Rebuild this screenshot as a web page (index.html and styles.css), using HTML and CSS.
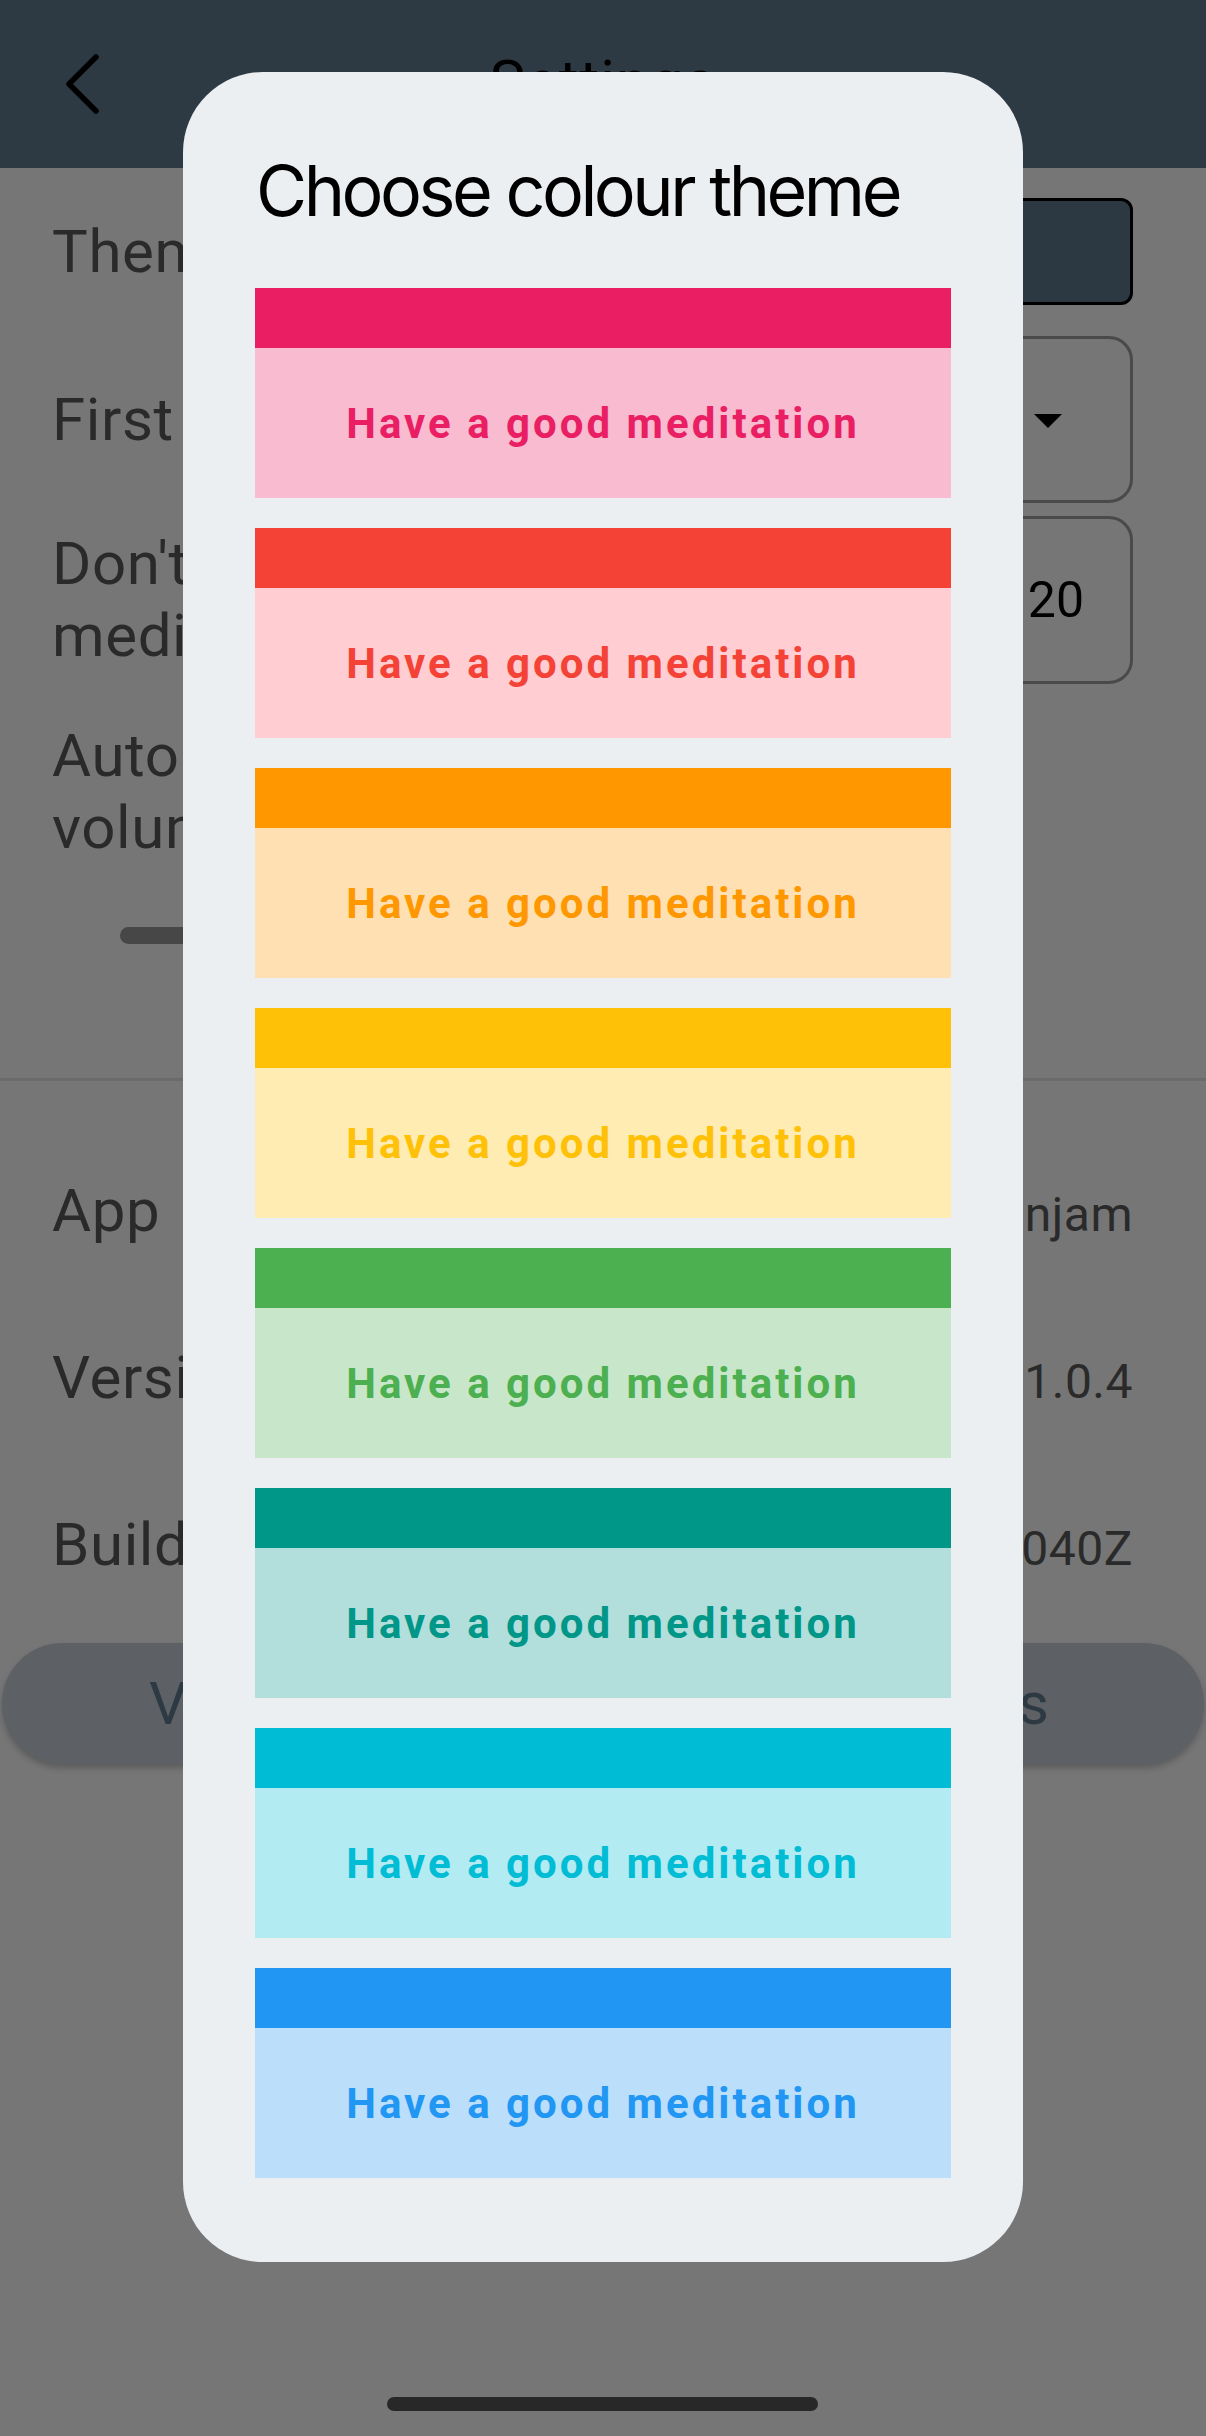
FILE: index.html
```html
<!DOCTYPE html>
<html lang="en">
<head>
<meta charset="utf-8">
<title>Settings</title>
<link rel="stylesheet" href="styles.css">
</head>
<body>
<div class="screen">
  <header class="appbar">
    <div class="back">
      <svg width="44" height="64" viewBox="0 0 44 64"><polyline points="36,5 9,32 36,59" fill="none" stroke="#000" stroke-width="5.5" stroke-linecap="round" stroke-linejoin="round"/></svg>
    </div>
    <div class="appbar-title">Settings</div>
    <div></div>
  </header>

  <main class="content">
    <div class="row row-theme">
      <div class="label">Theme</div>
      <div class="theme-swatch"></div>
    </div>
    <div class="row row-select">
      <div class="label">First screen</div>
      <div class="select"><span class="caret"></span></div>
    </div>
    <div class="row row-number">
      <div class="label">Don't disturb during<br>meditation</div>
      <div class="number">20</div>
    </div>
    <div class="label label-block">Automatic<br>volume</div>
    <div class="slider"><div class="track"></div></div>
  </main>

  <div class="divider"></div>

  <section class="info">
    <div class="info-row"><span class="label">App</span><span class="value">Medi by Benjam</span></div>
    <div class="info-row"><span class="label">Version</span><span class="value">1.0.4</span></div>
    <div class="info-row"><span class="label">Build time</span><span class="value">2023-05-1T00:00:00.040Z</span></div>
  </section>

  <div class="pill">View open source licences</div>

  <div class="dialog">
    <h1 class="dialog-title">Choose colour theme</h1>
    <div class="themes">
      <div class="theme t-pink"><div class="band"></div><div class="body">Have a good meditation</div></div>
      <div class="theme t-red"><div class="band"></div><div class="body">Have a good meditation</div></div>
      <div class="theme t-orange"><div class="band"></div><div class="body">Have a good meditation</div></div>
      <div class="theme t-amber"><div class="band"></div><div class="body">Have a good meditation</div></div>
      <div class="theme t-green"><div class="band"></div><div class="body">Have a good meditation</div></div>
      <div class="theme t-teal"><div class="band"></div><div class="body">Have a good meditation</div></div>
      <div class="theme t-cyan"><div class="band"></div><div class="body">Have a good meditation</div></div>
      <div class="theme t-blue"><div class="band"></div><div class="body">Have a good meditation</div></div>
    </div>
  </div>

  <div class="home-indicator"></div>
</div>
</body>
</html>
```

FILE: styles.css
```css
html, body {
  margin: 0;
  padding: 0;
}
body {
  width: 1206px;
  height: 2436px;
  overflow: hidden;
  background: #767676;
  font-family: Roboto, "Noto Sans", sans-serif;
}
.screen {
  position: relative;
  width: 1206px;
  height: 2436px;
  overflow: hidden;
  background: #767676;
}

/* header */
.appbar {
  height: 168px;
  box-sizing: border-box;
  padding-top: 46px;
  background: #2e3a43;
  display: grid;
  grid-template-columns: 1fr auto 1fr;
  align-items: start;
}
.back {
  padding-left: 60px;
  margin-top: 6px;
  height: 64px;
}
.back svg { display: block; }
.appbar-title {
  font-size: 60px;
  line-height: 72px;
  font-weight: 400;
  letter-spacing: 1px;
  color: #000;
}

/* settings content */
.content {
  padding: 30px 73px 0 52px;
  display: flex;
  flex-direction: column;
}
.row {
  display: flex;
  align-items: center;
  justify-content: space-between;
}
.label {
  font-size: 60px;
  line-height: 72px;
  letter-spacing: 0.6px;
  color: #2a2a2a;
  white-space: nowrap;
}
.row-theme { height: 107px; }
.row-select { height: 167px; margin-top: 31px; }
.row-number { height: 168px; margin-top: 13px; }
.theme-swatch {
  width: 300px;
  height: 107px;
  box-sizing: border-box;
  background: #2d3942;
  border: 3px solid #000;
  border-radius: 12px;
}
.select {
  width: 300px;
  height: 167px;
  box-sizing: border-box;
  border: 3px solid #4a4a4a;
  border-radius: 24px;
  display: flex;
  align-items: center;
  justify-content: flex-end;
  padding-right: 68px;
}
.caret {
  width: 0;
  height: 0;
  border-left: 14px solid transparent;
  border-right: 14px solid transparent;
  border-top: 14px solid #000;
  margin-top: 2px;
}
.number {
  width: 300px;
  height: 168px;
  box-sizing: border-box;
  border: 3px solid #4a4a4a;
  border-radius: 24px;
  display: flex;
  align-items: center;
  justify-content: flex-end;
  padding-right: 46px;
  font-size: 50px;
  color: #000;
}
.label-block { margin-top: 36px; }
.slider {
  margin-top: 63px;
  padding-left: 68px;
  padding-right: 300px;
}
.track {
  height: 17px;
  border-radius: 9px;
  background: #474747;
}

.divider {
  margin-top: 134px;
  height: 3px;
  background: #6b6b6b;
}

/* info rows */
.info {
  padding: 94px 73px 0 52px;
  display: flex;
  flex-direction: column;
  gap: 95px;
}
.info-row {
  display: flex;
  align-items: baseline;
  justify-content: space-between;
}
.value {
  font-size: 48px;
  color: #2a2a2a;
  letter-spacing: 0.5px;
}

.pill {
  margin: 62px 2px 0 2px;
  height: 121px;
  border-radius: 61px;
  background: #5d6165;
  box-shadow: 0 4px 6px rgba(0, 0, 0, 0.22);
  display: flex;
  align-items: center;
  justify-content: center;
  font-size: 60px;
  font-weight: 400;
  letter-spacing: 8px;
  color: #2e3a43;
  white-space: nowrap;
}

/* dialog */
.dialog {
  position: absolute;
  left: 183px;
  top: 72px;
  width: 840px;
  height: 2190px;
  box-sizing: border-box;
  padding: 84px 72px 0 72px;
  background: #ebeff2;
  border-radius: 80px;
}
.dialog-title {
  margin: 0 0 62px 1px;
  font-family: Inter, "Noto Sans", sans-serif;
  font-weight: 400;
  font-size: 70px;
  line-height: 70px;
  letter-spacing: -3.5px;
  color: #000;
  white-space: nowrap;
}
.themes {
  display: flex;
  flex-direction: column;
  gap: 30px;
}
.theme .band { height: 60px; }
.theme .body {
  height: 150px;
  display: flex;
  align-items: center;
  justify-content: center;
  font-family: Roboto, sans-serif;
  font-weight: 700;
  font-size: 42px;
  letter-spacing: 3px;
}
.t-pink .band { background: #e91e63; }
.t-pink .body { background: #f8bbd0; color: #e91e63; }
.t-red .band { background: #f44336; }
.t-red .body { background: #ffcdd2; color: #f44336; }
.t-orange .band { background: #ff9800; }
.t-orange .body { background: #ffe0b2; color: #ff9800; }
.t-amber .band { background: #ffc107; }
.t-amber .body { background: #ffecb3; color: #ffc107; }
.t-green .band { background: #4caf50; }
.t-green .body { background: #c8e6c9; color: #4caf50; }
.t-teal .band { background: #009688; }
.t-teal .body { background: #b2dfdb; color: #009688; }
.t-cyan .band { background: #00bcd4; }
.t-cyan .body { background: #b2ebf2; color: #00bcd4; }
.t-blue .band { background: #2196f3; }
.t-blue .body { background: #bbdefb; color: #2196f3; }

.home-indicator {
  position: absolute;
  left: 387px;
  top: 2397px;
  width: 431px;
  height: 14px;
  border-radius: 7px;
  background: #282828;
}
```
